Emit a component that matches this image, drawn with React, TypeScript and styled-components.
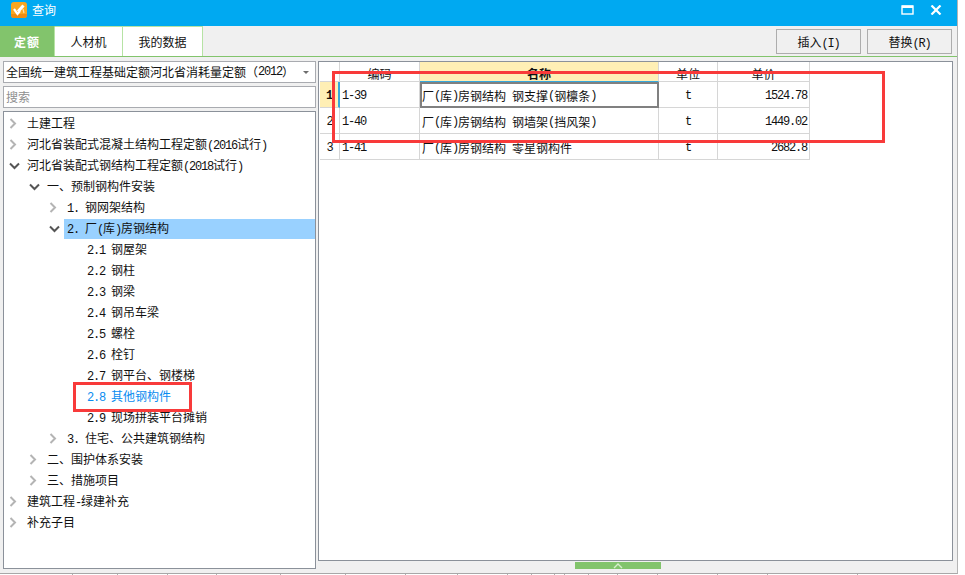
import React from 'react';
import styled, { createGlobalStyle } from 'styled-components';

const CJK = `'Noto Sans CJK SC', sans-serif`;

const GlobalStyle = createGlobalStyle`
    html, body {
        margin: 0;
        padding: 0;
        background: #fff;
    }
    body {
        font-family: ${CJK};
        font-size: 12px;
        color: #111;
    }
`;

const Page = styled.div`
    width: 965px;
    height: 575px;
    overflow: hidden;
    background: #fff;
`;

const Window = styled.div`
    box-sizing: border-box;
    width: 958px;
    height: 574px;
    background: #f0f0f0;
    border-right: 1px solid #b4b4b4;
    border-bottom: 1px solid #a8a8a8;
    display: flex;
    flex-direction: column;
`;

const TitleBar = styled.div`
    box-sizing: border-box;
    height: 26px;
    flex: none;
    background: #00a9f1;
    display: flex;
    align-items: center;
    padding: 0 0 6px 11px;
    color: #fff;
`;

const TitleText = styled.span`
    margin-left: 5px;
    line-height: 20px;
`;

const TitleButtons = styled.div`
    margin-left: auto;
    display: flex;
    align-items: center;
    gap: 16px;
    padding-right: 15px;
`;

const Toolbar = styled.div`
    height: 31px;
    flex: none;
    box-sizing: border-box;
    display: flex;
    align-items: stretch;
    border-bottom: 1px solid #82c46c;
    padding-right: 5px;
`;

const Tab = styled.div<{ $active?: boolean; $width: number }>`
    box-sizing: border-box;
    width: ${(p) => p.$width}px;
    display: flex;
    align-items: center;
    justify-content: center;
    background: ${(p) => (p.$active ? '#82c46c' : '#fff')};
    color: ${(p) => (p.$active ? '#fff' : '#111')};
    font-weight: ${(p) => (p.$active ? 700 : 400)};
    letter-spacing: ${(p) => (p.$active ? '1px' : '0')};
    border-right: 1px solid #b6e3a4;
    border-top: 1px solid ${(p) => (p.$active ? '#82c46c' : '#b6e3a4')};
`;

const ToolButtons = styled.div`
    margin-left: auto;
    display: flex;
    gap: 6px;
    padding: 3px 0 2px;
`;

const ToolButton = styled.button`
    box-sizing: border-box;
    width: 85px;
    height: 25px;
    padding: 0;
    background: #f0f0f0;
    border: 1px solid #adadad;
    color: #111;
    font-family: ${CJK};
    font-size: 12px;
    white-space: pre;
`;

const Body = styled.div`
    flex: 1;
    display: flex;
    gap: 2px;
    padding: 4px 0 0 3px;
    min-height: 0;
`;

const LeftColumn = styled.div`
    width: 313px;
    flex: none;
    display: flex;
    flex-direction: column;
    gap: 3px;
    height: 508px;
`;

const Combo = styled.div`
    box-sizing: border-box;
    height: 22px;
    background: #fff;
    border: 1px solid #a9abb0;
    display: flex;
    align-items: center;
    padding: 0 6px 1px 2px;
    white-space: pre;
`;

const ComboCaret = styled.span`
    margin-left: auto;
    margin-top: 2px;
    width: 0;
    height: 0;
    border-left: 3px solid transparent;
    border-right: 3px solid transparent;
    border-top: 3px solid #6d6d6d;
`;

const SearchBox = styled.input`
    box-sizing: border-box;
    height: 22px;
    width: 100%;
    margin: 0;
    padding: 0 2px 2px;
    background: #fff;
    border: 1px solid #a9abb0;
    outline: none;
    font-family: ${CJK};
    font-size: 12px;
    &::placeholder {
        color: #8f8f8f;
        opacity: 1;
    }
`;

const TreePanel = styled.div`
    position: relative;
    flex: 1;
    box-sizing: border-box;
    background: #fff;
    border: 1px solid #8b919a;
    padding-top: 1px;
`;

const TreeRow = styled.div<{ $level: number }>`
    display: flex;
    align-items: center;
    height: 21px;
    padding-left: ${(p) => 5 + p.$level * 20}px;
`;

const ArrowSlot = styled.span`
    width: 15px;
    flex: none;
    display: flex;
    align-items: center;
    justify-content: flex-start;
`;

const TreeLabel = styled.span<{ $selected?: boolean; $link?: boolean }>`
    flex: 1;
    height: 20px;
    line-height: 18px;
    padding-left: 3px;
    white-space: pre;
    background: ${(p) => (p.$selected ? '#99d1ff' : 'transparent')};
    color: ${(p) => (p.$link ? '#0a8cf0' : '#111')};
`;

const RedFrame = styled.div<{ $left: number; $top: number; $width: number; $height: number }>`
    position: absolute;
    box-sizing: border-box;
    left: ${(p) => p.$left}px;
    top: ${(p) => p.$top}px;
    width: ${(p) => p.$width}px;
    height: ${(p) => p.$height}px;
    border: 3px solid #f83a3a;
    pointer-events: none;
`;

const RightColumn = styled.div`
    width: 635px;
    flex: none;
    display: flex;
    flex-direction: column;
`;

const GridPanel = styled.div`
    position: relative;
    box-sizing: border-box;
    height: 500px;
    background: #fff;
    border: 1px solid #8b919a;
    padding-left: 1px;
`;

const Grid = styled.div`
    display: grid;
    width: fit-content;
    grid-template-columns: 20px 80px 239px 59px 92px;
    grid-template-rows: 20px 26px 26px 26px;
`;

const HeadCell = styled.div<{ $active?: boolean }>`
    box-sizing: border-box;
    display: flex;
    align-items: center;
    justify-content: center;
    padding-top: 3px;
    background: ${(p) => (p.$active ? '#ffefb5' : '#fff')};
    font-weight: ${(p) => (p.$active ? 700 : 400)};
    border-right: 1px solid #d6d6d6;
    border-bottom: ${(p) => (p.$active ? '1px solid #35a7dc' : '1px solid #d6d6d6')};
`;

const RowHead = styled.div<{ $active?: boolean }>`
    box-sizing: border-box;
    display: flex;
    align-items: center;
    justify-content: center;
    padding-top: 2px;
    background: ${(p) => (p.$active ? '#ffefb5' : '#fff')};
    font-weight: ${(p) => (p.$active ? 700 : 400)};
    border-bottom: 1px solid #d6d6d6;
    border-right: ${(p) => (p.$active ? '2px solid #35a7dc' : '1px solid #d6d6d6')};
`;

const Cell = styled.div<{ $align?: string; $current?: boolean }>`
    box-sizing: border-box;
    display: flex;
    align-items: center;
    justify-content: ${(p) => p.$align || 'flex-start'};
    padding: 2px 2px 0;
    white-space: pre;
    border-right: 1px solid #d6d6d6;
    border-bottom: 1px solid #d6d6d6;
    ${(p) => (p.$current ? 'border: 2px solid #808080; padding: 1px 0 0;' : '')}
`;

const Grip = styled.div`
    width: 86px;
    height: 7px;
    margin: 1px 0 0 257px;
    background: #82c46c;
    display: flex;
    justify-content: center;
    align-items: flex-end;
`;

const PageFoot = styled.div`
    display: flex;
    height: 1px;
    width: 958px;
`;

const FootCell = styled.span<{ $width: number }>`
    box-sizing: border-box;
    width: ${(p) => p.$width}px;
    height: 1px;
    border-right: 1px solid #b0b0b0;
`;

const Lat = styled.span`
    font-family: 'Liberation Mono', monospace;
    font-size: 12px;
    letter-spacing: -1.2px;
`;

// latin runs are half width in the original font
const mixed = (text: string) =>
    text
        .split(/([\x20-\x7e]+)/)
        .map((part, i) => (i % 2 === 1 ? <Lat key={i}>{part}</Lat> : part));

const Chevron = ({ open }: { open?: boolean }) =>
    open ? (
        <svg width="11" height="8" viewBox="0 0 11 8">
            <path d="M1 1.5 L5.5 6 L10 1.5" fill="none" stroke="#555" strokeWidth="2" />
        </svg>
    ) : (
        <svg width="8" height="11" viewBox="0 0 8 11">
            <path d="M1.5 1 L6 5.5 L1.5 10" fill="none" stroke="#b4b4b4" strokeWidth="2" />
        </svg>
    );

const AppIcon = () => (
    <svg width="16" height="16" viewBox="0 0 16 16">
        <rect width="16" height="16" rx="3" fill="#f9a620" />
        <path d="M0 12 L16 12 L16 13 Q16 16 13 16 L3 16 Q0 16 0 13 Z" fill="#ee8c12" />
        <path d="M3 7 L6.5 12 L9 9" fill="none" stroke="#fff" strokeWidth="2.2" />
        <path d="M7 9.5 L12.5 3.5" stroke="#fff" strokeWidth="3" />
        <path d="M12 7 L13 11" stroke="#fde2ad" strokeWidth="1.2" />
    </svg>
);

const MaxIcon = () => (
    <svg width="13" height="10" viewBox="0 0 13 10">
        <rect x="1" y="1" width="11" height="8" fill="none" stroke="#fff" strokeWidth="1.4" />
        <rect x="1" y="0.5" width="11" height="2.5" fill="#fff" />
    </svg>
);

const CloseIcon = () => (
    <svg width="12" height="10" viewBox="0 0 12 10">
        <path d="M1.5 0.5 L10.5 9.5 M10.5 0.5 L1.5 9.5" stroke="#fff" strokeWidth="2.2" />
    </svg>
);

type TreeItem = {
    level: number;
    text: string;
    arrow?: 'open' | 'closed';
    selected?: boolean;
    link?: boolean;
};

const treeItems: TreeItem[] = [
    { level: 0, text: '土建工程', arrow: 'closed' },
    { level: 0, text: '河北省装配式混凝土结构工程定额(2016试行)', arrow: 'closed' },
    { level: 0, text: '河北省装配式钢结构工程定额(2018试行)', arrow: 'open' },
    { level: 1, text: '一、预制钢构件安装', arrow: 'open' },
    { level: 2, text: '1. 钢网架结构', arrow: 'closed' },
    { level: 2, text: '2. 厂(库)房钢结构', arrow: 'open', selected: true },
    { level: 3, text: '2.1 钢屋架' },
    { level: 3, text: '2.2 钢柱' },
    { level: 3, text: '2.3 钢梁' },
    { level: 3, text: '2.4 钢吊车梁' },
    { level: 3, text: '2.5 螺栓' },
    { level: 3, text: '2.6 栓钉' },
    { level: 3, text: '2.7 钢平台、钢楼梯' },
    { level: 3, text: '2.8 其他钢构件', link: true },
    { level: 3, text: '2.9 现场拼装平台摊销' },
    { level: 2, text: '3. 住宅、公共建筑钢结构', arrow: 'closed' },
    { level: 1, text: '二、围护体系安装', arrow: 'closed' },
    { level: 1, text: '三、措施项目', arrow: 'closed' },
    { level: 0, text: '建筑工程-绿建补充', arrow: 'closed' },
    { level: 0, text: '补充子目', arrow: 'closed' },
];

const rows = [
    { no: '1', code: '1-39', name: '厂(库)房钢结构 钢支撑(钢檩条)', unit: 't', price: '1524.78' },
    { no: '2', code: '1-40', name: '厂(库)房钢结构 钢墙架(挡风架)', unit: 't', price: '1449.02' },
    { no: '3', code: '1-41', name: '厂(库)房钢结构 零星钢构件', unit: 't', price: '2682.8' },
];

const footCells = [73, 45, 50, 49, 64, 65, 60, 52, 50, 24, 23, 10, 24, 29, 40, 60, 50, 90];

const App = () => (
    <Page>
        <GlobalStyle />
        <Window>
            <TitleBar>
                <AppIcon />
                <TitleText>查询</TitleText>
                <TitleButtons>
                    <MaxIcon />
                    <CloseIcon />
                </TitleButtons>
            </TitleBar>
            <Toolbar>
                <Tab $active $width={55}>定额</Tab>
                <Tab $width={68}>人材机</Tab>
                <Tab $width={80}>我的数据</Tab>
                <ToolButtons>
                    <ToolButton>{mixed('插入(I)')}</ToolButton>
                    <ToolButton>{mixed('替换(R)')}</ToolButton>
                </ToolButtons>
            </Toolbar>
            <Body>
                <LeftColumn>
                    <Combo>
                        全国统一建筑工程基础定额河北省消耗量定额（<Lat>2012</Lat>）
                        <ComboCaret />
                    </Combo>
                    <SearchBox placeholder="搜索" readOnly />
                    <TreePanel>
                        {treeItems.map((item) => (
                            <TreeRow key={item.text} $level={item.level}>
                                <ArrowSlot>
                                    {item.arrow && <Chevron open={item.arrow === 'open'} />}
                                </ArrowSlot>
                                <TreeLabel $selected={item.selected} $link={item.link}>
                                    {mixed(item.text)}
                                </TreeLabel>
                            </TreeRow>
                        ))}
                        <RedFrame $left={69} $top={270} $width={119} $height={30} />
                    </TreePanel>
                </LeftColumn>
                <RightColumn>
                    <GridPanel>
                        <Grid>
                            <HeadCell />
                            <HeadCell>编码</HeadCell>
                            <HeadCell $active>名称</HeadCell>
                            <HeadCell>单位</HeadCell>
                            <HeadCell>单价</HeadCell>
                            {rows.map((row, i) => (
                                <React.Fragment key={row.no}>
                                    <RowHead $active={i === 0}><Lat>{row.no}</Lat></RowHead>
                                    <Cell><Lat>{row.code}</Lat></Cell>
                                    <Cell $current={i === 0}>{mixed(row.name)}</Cell>
                                    <Cell $align="center"><Lat>{row.unit}</Lat></Cell>
                                    <Cell $align="flex-end"><Lat>{row.price}</Lat></Cell>
                                </React.Fragment>
                            ))}
                        </Grid>
                        <RedFrame $left={13} $top={9} $width={553} $height={72} />
                    </GridPanel>
                    <Grip>
                        <svg width="10" height="6" viewBox="0 0 10 6">
                            <path d="M1 5 L5 1 L9 5" fill="none" stroke="#d6eecb" strokeWidth="1.4" />
                        </svg>
                    </Grip>
                </RightColumn>
            </Body>
        </Window>
        <PageFoot>
            {footCells.map((w, i) => (
                <FootCell key={i} $width={w} />
            ))}
        </PageFoot>
    </Page>
);

export default App;
